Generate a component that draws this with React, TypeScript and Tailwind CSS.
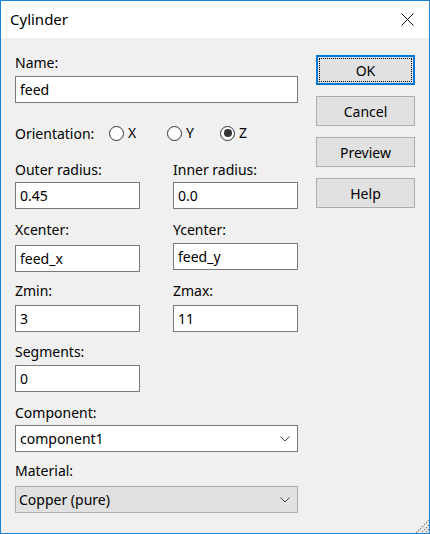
import React from "react";

const font = { fontFamily: '"Noto Sans", "Segoe UI", sans-serif' };

function Field({ value, className = "" }: { value: string; className?: string }) {
  return (
    <div
      className={`h-[27px] border border-[#7a7a7a] bg-white pl-[4px] flex items-center text-[14px] text-black ${className}`}
    >
      {value}
    </div>
  );
}

function Label({ text, className = "" }: { text: string; className?: string }) {
  return <div className={`h-[20px] leading-[20px] text-[14px] text-black ${className}`}>{text}</div>;
}

function Chevron() {
  return (
    <svg width="10" height="6" viewBox="0 0 10 6" className="mr-[7px]">
      <polyline points="0.5,0.5 5,5 9.5,0.5" fill="none" stroke="#444" strokeWidth="1" />
    </svg>
  );
}

function Select({ value, disabled }: { value: string; disabled?: boolean }) {
  return (
    <div
      className={`h-[27px] w-[283px] flex items-center justify-between text-[14px] text-black ${
        disabled ? "bg-[#e1e1e1] border border-[#adadad] pl-[3px]" : "bg-white border border-[#7a7a7a] pl-[4px]"
      }`}
    >
      <span>{value}</span>
      <Chevron />
    </div>
  );
}

function Radio({ label, checked }: { label: string; checked?: boolean }) {
  return (
    <div className="flex items-center">
      <div className="w-[15px] h-[15px] rounded-full border border-[#333] bg-white flex items-center justify-center">
        {checked && <div className="w-[8px] h-[8px] rounded-full bg-[#333]" />}
      </div>
      <span className="ml-[4px] text-[14px] leading-[20px]">{label}</span>
    </div>
  );
}

function Button({ text, focused }: { text: string; focused?: boolean }) {
  if (focused) {
    return (
      <div className="h-[30px] w-[99px] border-2 border-[#0078d7] bg-[#e1e1e1] p-[1px]">
        <div className="h-full w-full border border-dotted border-black flex items-center justify-center text-[14px]">
          {text}
        </div>
      </div>
    );
  }
  return (
    <div className="h-[30px] w-[99px] border border-[#adadad] bg-[#e1e1e1] flex items-center justify-center text-[14px]">
      {text}
    </div>
  );
}

export default function App() {
  return (
    <div className="w-[430px] h-[534px] border border-[#1883d7] bg-[#f0f0f0] flex flex-col relative text-black" style={font}>
      <div className="h-[37px] bg-white flex items-center justify-between shrink-0">
        <span className="ml-[9px] text-[15px]">Cylinder</span>
        <svg width="13" height="13" viewBox="0 0 13 13" className="mr-[15px]">
          <path d="M0.5 0.5 L12.5 12.5 M12.5 0.5 L0.5 12.5" stroke="#111" strokeWidth="1" />
        </svg>
      </div>

      <div className="flex pl-[14px]">
        <div className="flex flex-col w-[283px] pt-[15px]">
          <Label text="Name:" />
          <Field value="feed" className="mt-[3px]" />

          <div className="flex items-center mt-[20px] h-[20px]">
            <span className="text-[14px] w-[94px]">Orientation:</span>
            <div className="w-[58px]"><Radio label="X" /></div>
            <div className="w-[53px]"><Radio label="Y" /></div>
            <Radio label="Z" checked />
          </div>

          <div className="flex mt-[17px]">
            <div className="flex flex-col w-[125px]">
              <Label text="Outer radius:" />
              <Field value="0.45" className="mt-[2px]" />
            </div>
            <div className="flex flex-col w-[125px] ml-[33px]">
              <Label text="Inner radius:" />
              <Field value="0.0" className="mt-[2px]" />
            </div>
          </div>

          <div className="flex mt-[11px]">
            <div className="flex flex-col w-[125px]">
              <Label text="Xcenter:" />
              <Field value="feed_x" className="mt-[5px]" />
            </div>
            <div className="flex flex-col w-[125px] ml-[33px]">
              <Label text="Ycenter:" />
              <Field value="feed_y" className="mt-[3px]" />
            </div>
          </div>

          <div className="flex mt-[9px]">
            <div className="flex flex-col w-[125px]">
              <Label text="Zmin:" />
              <Field value="3" className="mt-[4px]" />
            </div>
            <div className="flex flex-col w-[125px] ml-[33px]">
              <Label text="Zmax:" />
              <Field value="11" className="mt-[4px]" />
            </div>
          </div>

          <Label text="Segments:" className="mt-[10px]" />
          <Field value="0" className="mt-[3px] w-[125px]" />

          <Label text="Component:" className="mt-[11px]" />
          <div className="mt-[2px]"><Select value="component1" /></div>

          <Label text="Material:" className="mt-[9px]" />
          <div className="mt-[5px]"><Select value="Copper (pure)" disabled /></div>
        </div>

        <div className="flex flex-col ml-[18px] pt-[17px] gap-[11px]">
          <Button text="OK" focused />
          <Button text="Cancel" />
          <Button text="Preview" />
          <Button text="Help" />
        </div>
      </div>

      <svg width="14" height="14" viewBox="0 0 14 14" className="absolute right-0 bottom-0">
        <path
          d="M14 1 L1 14 M14 6 L6 14 M14 10 L10 14"
          stroke="#8a8a8a"
          strokeWidth="1.5"
          strokeDasharray="1.4 1.4"
        />
      </svg>
    </div>
  );
}
